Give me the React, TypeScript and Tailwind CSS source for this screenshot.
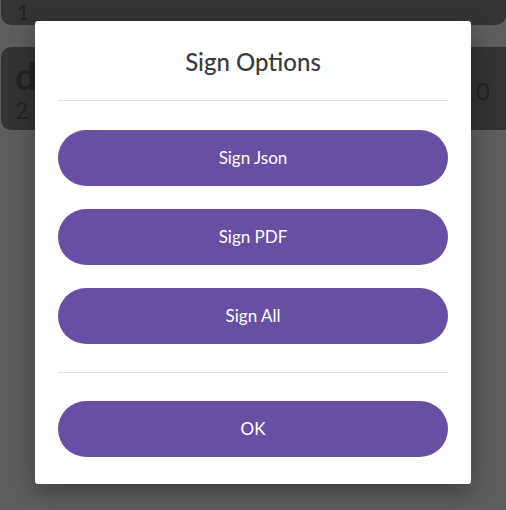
export default function App() {
  const options = ['Sign Json', 'Sign PDF', 'Sign All'];
  return (
    <div className="relative h-[510px] w-[506px] overflow-hidden bg-[#5e5d5f] font-['Lato',sans-serif]">
      {/* page behind the dialog */}
      <div className="flex flex-col gap-[22px] pl-[1px]">
        <div className="-mt-[20px] h-[45px] rounded-b-[10px] rounded-l-[10px] bg-[#343434] pl-[16px] pt-[20px] text-[21px] leading-[24px] text-[#232323]">1</div>
        <div className="flex h-[83px] justify-between rounded-l-[10px] bg-[#343434] pl-[14px] pr-[16px]">
          <div className="flex flex-col">
            <span className="pt-[8px] text-[38px] font-bold leading-[40px] text-[#222]">d</span>
            <span className="mt-[2px] text-[23px] leading-[26px] text-[#232323]">2</span>
          </div>
          <span className="pt-[26px] text-[24px] text-[#232323]">0</span>
        </div>
      </div>

      {/* dialog */}
      <div className="absolute left-[35px] top-[21px] w-[436px] rounded-[3px] bg-white px-[23px] pb-[27px] pt-[25px] shadow-[0_8px_24px_rgba(0,0,0,0.35)]">
        <h2 className="text-center text-[24px] font-medium leading-[32px] text-[#3b3a42]">Sign Options</h2>
        <div className="mt-[22px] h-px bg-[#e0e0e0]" />
        <div className="mt-[29px] flex flex-col gap-[23px]">
          {options.map((o) => (
            <button key={o} className="h-[56px] w-full rounded-full bg-[#6750a3] text-[17px] text-white">{o}</button>
          ))}
        </div>
        <div className="mt-[28px] h-px bg-[#e0e0e0]" />
        <button className="mt-[28px] h-[56px] w-full rounded-full bg-[#6750a3] text-[17px] text-white">OK</button>
      </div>
    </div>
  );
}
